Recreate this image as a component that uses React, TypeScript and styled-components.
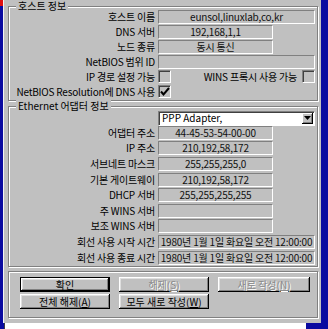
import { Fragment } from "react";
import styled, { createGlobalStyle } from "styled-components";

const GlobalStyle = createGlobalStyle`
  html, body {
    margin: 0;
    padding: 0;
  }
  body {
    background: #0a0aa0;
    font-family: "Noto Sans CJK KR", "Noto Sans", sans-serif;
    font-size: 10px;
    color: #000;
  }
`;

const Screen = styled.div`
  width: 328px;
  height: 329px;
  display: grid;
  grid-template-columns: 3px 318px 1fr;
  grid-template-rows: 323px 1fr;
  background: #0a0aa0;
  overflow: hidden;
`;

const LeftStrip = styled.div`
  grid-row: 1 / 3;
  display: flex;
  flex-direction: column;
`;

const RedCorner = styled.div`
  width: 3px;
  height: 6px;
  background: #e01010;
`;

const Window = styled.div`
  background: #c0c0c0;
  border-left: 1px solid #f4f4f4;
  padding: 6px 3px 0 4px;
  display: flex;
  flex-direction: column;
`;

const BottomStrip = styled.div`
  margin-left: 1px;
  width: 301px;
  background: #fff;
  border-left: 1px solid #404040;
`;

const Group = styled.div<{ $gap?: number }>`
  margin-top: ${p => p.$gap ?? 0}px;
  border: 1px solid #808080;
  box-shadow: inset 1px 1px 0 #fff, 1px 1px 0 #fff;
  padding: 0 2px 1px 2px;
  display: flex;
  flex-direction: column;
`;

const GroupTitle = styled.span`
  align-self: flex-start;
  margin: -7px 0 0 5px;
  padding: 0 2px;
  line-height: 12px;
  background: #c0c0c0;
  white-space: nowrap;
`;

const Rows = styled.div<{ $pitch: number; $first: number; $shift: number }>`
  margin-top: ${p => p.$shift}px;
  display: grid;
  grid-template-columns: 144px 1fr;
  grid-template-rows: ${p => p.$first}px;
  grid-auto-rows: ${p => p.$pitch}px;
  column-gap: 3px;
  align-items: center;
`;

const Label = styled.span`
  text-align: right;
  white-space: nowrap;
  line-height: 14px;
  letter-spacing: -0.2px;
`;

const Field = styled.div<{ $wide?: boolean }>`
  box-sizing: border-box;
  width: ${p => (p.$wide ? "100%" : "115px")};
  height: 14px;
  border: 1px solid;
  border-color: #808080 #fff #fff #808080;
  display: flex;
  align-items: center;
  justify-content: center;
  white-space: nowrap;
  line-height: 12px;
  color: #101010;
  letter-spacing: -0.2px;
`;

const CheckCell = styled.div`
  display: flex;
  align-items: center;
  gap: 5px;
`;

const CheckText = styled.span`
  margin-left: auto;
  white-space: nowrap;
  letter-spacing: -0.2px;
`;

const Box = styled.div`
  box-sizing: border-box;
  width: 13px;
  height: 13px;
  border: 1px solid;
  border-color: #808080 #fff #fff #808080;
  box-shadow: inset 1px 1px 0 #404040;
  display: flex;
  align-items: center;
  justify-content: center;
`;

const Select = styled.div`
  box-sizing: border-box;
  height: 15px;
  border: 1px solid;
  border-color: #808080 #fff #fff #808080;
  box-shadow: inset 1px 1px 0 #404040;
  background: #fff;
  display: flex;
  align-items: center;
  padding: 0 1px 0 3px;
`;

const SelectText = styled.span`
  flex: 1;
  line-height: 12px;
  white-space: nowrap;
`;

const DropButton = styled.div`
  width: 11px;
  height: 11px;
  background: #c0c0c0;
  box-shadow: inset -1px -1px 0 #000, inset 1px 1px 0 #fff, inset -2px -2px 0 #808080;
  display: flex;
  align-items: center;
  justify-content: center;
`;

const ButtonPanel = styled.div`
  margin-top: 4px;
  border: 1px solid #808080;
  box-shadow: inset 1px 1px 0 #fff, 1px 1px 0 #fff;
  padding: 5px 0 8px 11px;
  display: grid;
  grid-template-columns: 90px 90px 92px;
  grid-auto-rows: 15px;
  column-gap: 9px;
  row-gap: 2px;
`;

const Button = styled.div<{ $default?: boolean; $disabled?: boolean }>`
  box-sizing: border-box;
  display: flex;
  align-items: center;
  justify-content: center;
  background: #c0c0c0;
  white-space: nowrap;
  line-height: 12px;
  color: ${p => (p.$disabled ? "#8a8a8a" : "#000")};
  text-shadow: ${p => (p.$disabled ? "1px 1px 0 #fff" : "none")};
  border: ${p => (p.$default ? "1px solid #000" : "none")};
  box-shadow: inset -1px -1px 0 #000, inset 1px 1px 0 #fff, inset -2px -2px 0 #808080,
    inset 2px 2px 0 #dfdfdf;
`;

const hostRows: [string, string, boolean][] = [
  ["호스트 이름", "eunsol,linuxlab,co,kr", true],
  ["DNS 서버", "192,168,1,1", false],
  ["노드 종류", "동시 통신", false],
  ["NetBIOS 범위 ID", "", true],
];

const adapterRows: [string, string, boolean][] = [
  ["어댑터 주소", "44-45-53-54-00-00", false],
  ["IP 주소", "210,192,58,172", false],
  ["서브네트 마스크", "255,255,255,0", false],
  ["기본 게이트웨이", "210,192,58,172", false],
  ["DHCP 서버", "255,255,255,255", false],
  ["주 WINS 서버", "", false],
  ["보조 WINS 서버", "", false],
  ["회선 사용 시작 시간", "1980년 1월 1일 화요일 오전 12:00:00", true],
  ["회선 사용 종료 시간", "1980년 1월 1일 화요일 오전 12:00:00", true],
];

const Check = () => (
  <svg width="10" height="10" viewBox="0 0 10 10">
    <path d="M1 4.5 L3.5 7.5 L9 1" fill="none" stroke="#000" strokeWidth="2" />
  </svg>
);

const Arrow = () => (
  <svg width="7" height="4" viewBox="0 0 7 4">
    <path d="M0 0 H7 L3.5 4 Z" fill="#000" />
  </svg>
);

export default function App() {
  return (
    <>
      <GlobalStyle />
      <Screen>
        <LeftStrip>
          <RedCorner />
        </LeftStrip>
        <Window>
          <Group>
            <GroupTitle>호스트 정보</GroupTitle>
            <Rows $first={15} $pitch={15} $shift={-3}>
              {hostRows.map(([label, value, wide]) => (
                <Fragment key={label}>
                  <Label>{label}</Label>
                  <Field $wide={wide}>{value}</Field>
                </Fragment>
              ))}
              <Label>IP 경로 설정 가능</Label>
              <CheckCell>
                <Box />
                <CheckText>WINS 프록시 사용 가능</CheckText>
                <Box />
              </CheckCell>
              <Label>NetBIOS Resolution에 DNS 사용</Label>
              <CheckCell>
                <Box>
                  <Check />
                </Box>
              </CheckCell>
            </Rows>
          </Group>

          <Group $gap={5}>
            <GroupTitle>Ethernet 어댑터 정보</GroupTitle>
            <Rows $first={14} $pitch={15.6} $shift={-1}>
              <span />
              <Select>
                <SelectText>PPP Adapter,</SelectText>
                <DropButton>
                  <Arrow />
                </DropButton>
              </Select>
              {adapterRows.map(([label, value, wide]) => (
                <Fragment key={label}>
                  <Label>{label}</Label>
                  <Field $wide={wide}>{value}</Field>
                </Fragment>
              ))}
            </Rows>
          </Group>

          <ButtonPanel>
            <Button $default>확인</Button>
            <Button $disabled>
              해제(<u>S</u>)
            </Button>
            <Button $disabled>
              새로 작성(<u>N</u>)
            </Button>
            <Button>
              전체 해제(<u>A</u>)
            </Button>
            <Button>
              모두 새로 작성(<u>W</u>)
            </Button>
          </ButtonPanel>
        </Window>
        <span />
        <BottomStrip />
      </Screen>
    </>
  );
}
